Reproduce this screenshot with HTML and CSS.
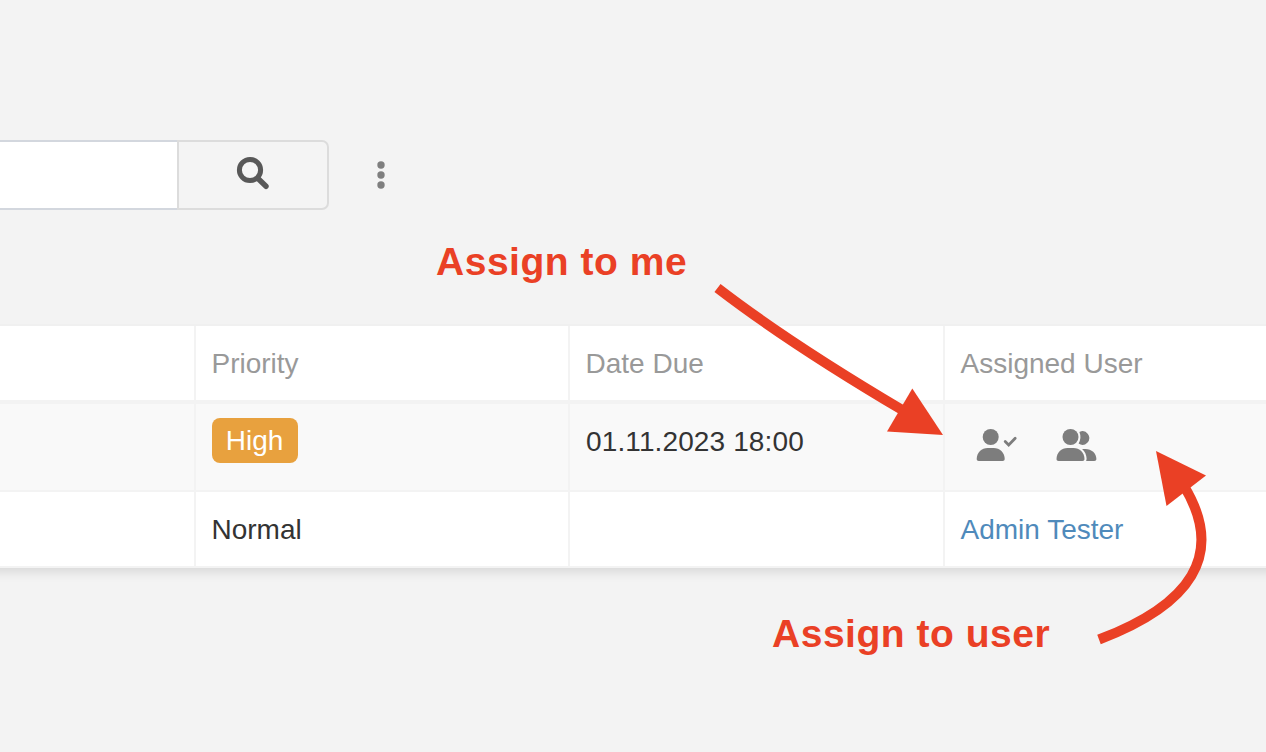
FILE: index.html
```html
<!DOCTYPE html>
<html lang="en">
<head>
<meta charset="utf-8">
<title>Tasks</title>
<link rel="stylesheet" href="styles.css">
</head>
<body>
<main class="page">
  <div class="search-row">
    <div class="search-input"></div>
    <button class="search-button" aria-label="Search">
      <svg width="34" height="34" viewBox="0 0 34 34" fill="none" stroke="#585858"><circle cx="14" cy="14" r="10.600" stroke-width="5"/><path d="M22 22.500L30 30.300" stroke-width="5.400" stroke-linecap="round"/></svg>
    </button>
    <button class="menu-button" aria-label="Menu">
      <svg width="8" height="28" viewBox="0 0 8 28" fill="#7e7e7e"><circle cx="4" cy="4" r="3.700"/><circle cx="4" cy="14" r="3.700"/><circle cx="4" cy="24" r="3.700"/></svg>
    </button>
  </div>

  <section class="list">
    <div class="row head">
      <div class="cell"></div>
      <div class="cell">Priority</div>
      <div class="cell">Date Due</div>
      <div class="cell">Assigned User</div>
    </div>
    <div class="row striped">
      <div class="cell"></div>
      <div class="cell"><span class="badge">High</span></div>
      <div class="cell date">01.11.2023 18:00</div>
      <div class="cell actions">
        <svg width="42" height="34" viewBox="0.300 0 42 34" fill="#7d7d7d"><circle cx="15" cy="9" r="8"/><path d="M1 31C1 24.500 6 20 12 20H18C24 20 29 24.500 29 31C29 32.300 28.200 33 27 33H3C1.800 33 1 32.300 1 31Z"/><path d="M29.500 13.500L33 17L39.500 10.200" fill="none" stroke="#7d7d7d" stroke-width="2.800" stroke-linecap="round" stroke-linejoin="miter"/></svg>
        <svg width="42" height="34" viewBox="0.500 0 42 34" fill="#7d7d7d"><circle cx="15" cy="9" r="8"/><path d="M1 31C1 24.500 6 20 12 20H18C24 20 29 24.500 29 31C29 32.300 28.200 33 27 33H3C1.800 33 1 32.300 1 31Z"/><path d="M23.900 3.900A6.800 6.800 0 1 1 23.100 15.600Q26.300 9.500 23.900 3.900Z"/><path d="M26.600 21H30C36 21 40.900 25.300 40.900 31C40.900 32.300 40 33 38.700 33H30.600Q31.100 32.100 31.100 30.600C31.100 27 29.300 23.300 26.600 21Z"/></svg>
      </div>
    </div>
    <div class="row last">
      <div class="cell"></div>
      <div class="cell">Normal</div>
      <div class="cell"></div>
      <div class="cell"><a class="user-link">Admin Tester</a></div>
    </div>
  </section>

  <div class="note note-me">Assign to me</div>
  <div class="note note-user">Assign to user</div>
  <svg class="arrows" width="1266" height="752" viewBox="0 0 1266 752">
    <g fill="none" stroke="#ea4025" stroke-width="10">
      <path d="M717.500 288Q789 343 904 411"/>
      <path d="M1099 639.500C1190 605 1226 555 1184 486"/>
    </g>
    <g fill="#ea4025"><path d="M943 435L912.300 388.500L887 431.500Z"/><path d="M1156 451L1206 475.500L1166.500 506Z"/></g>
  </svg>
</main>
</body>
</html>
```

FILE: styles.css
```css
* { box-sizing: border-box; }

body { margin: 0; background: #f3f3f3; }

.page {
  position: relative;
  width: 1266px;
  height: 752px;
  padding-top: 140px;
  overflow: hidden;
  background: #f3f3f3;
  color: #333;
  font: 28px/40px "Liberation Sans", Arial, sans-serif;
}

.search-row { display: flex; height: 70px; }

.search-input {
  width: 177px;
  background: #fff;
  border: solid #d3d7de;
  border-width: 2px 0;
}

.search-button {
  width: 152px;
  padding: 0 0 4px;
  background: #f4f4f4;
  border: 2px solid #dcdcdc;
  border-radius: 0 7px 7px 0;
}

.search-button svg { display: block; margin: 0 auto; }

.menu-button {
  display: flex;
  align-items: center;
  margin-left: 47.600px;
  padding: 0;
  border: 0;
  background: none;
}

.list {
  margin: 114px -20px 0;
  border-top: 2px solid #f0f0f0;
  box-shadow: 0 2px 12px rgba(0, 0, 0, 0.15);
  clip-path: inset(0 0 -20px 0);
}

.row {
  display: grid;
  grid-template-columns: 216px 374px 375px 341px;
  height: 88px;
  background: #fff;
  border-bottom: 2px solid #f3f3f3;
}

.row.head { height: 78px; border-bottom-width: 4px; color: #999; }
.row.striped { background: #f9f9f9; }
.row.last { height: 76px; }

.cell {
  padding: 18px 16px 16px 15.500px;
  border-right: 2px solid #f3f3f3;
  white-space: nowrap;
}

.cell:last-child { border-right: 0; }

.striped .cell { padding: 14px 16px; }
.striped .date { padding-top: 18px; letter-spacing: 0.120px; }

.badge {
  display: block;
  width: 86px;
  height: 45px;
  padding-right: 1px;
  border-radius: 8px;
  background: #e8a13e;
  color: #fff;
  line-height: 45px;
  text-align: center;
}

.striped .actions {
  display: flex;
  gap: 38px;
  padding: 24px 0 0 31px;
}

.user-link { color: #4f8abb; }

.note {
  position: absolute;
  color: #ea4025;
  font-size: 39px;
  font-weight: 700;
  line-height: 44px;
  letter-spacing: 0.520px;
  white-space: nowrap;
}

.note-me { left: 436px; top: 240px; }
.note-user { left: 772px; top: 612px; }

.arrows { position: absolute; left: 0; top: 0; }
```
